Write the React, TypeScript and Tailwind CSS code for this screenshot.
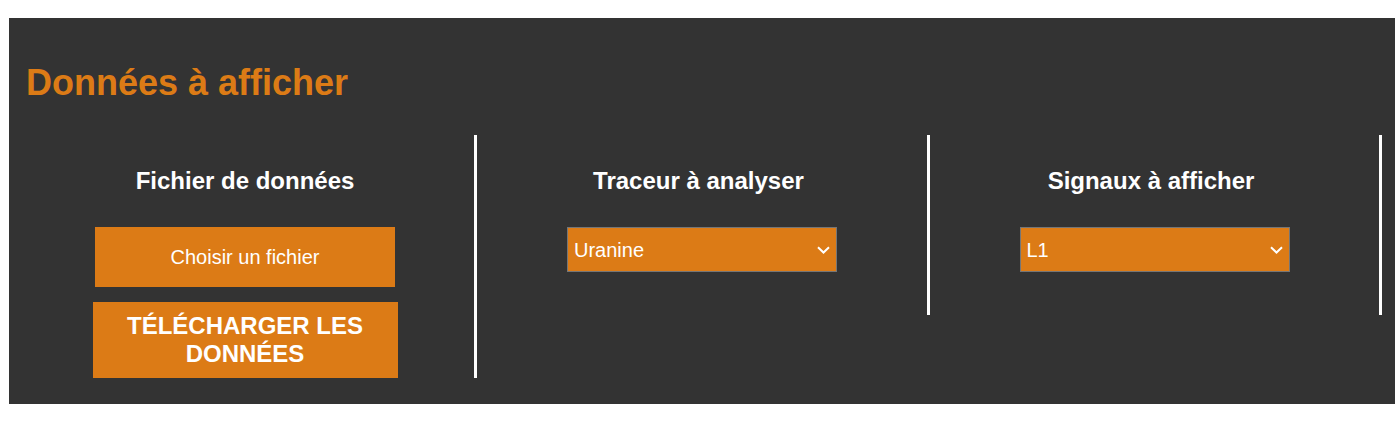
import React from "react";

const Chevron = () => (
  <svg
    className="pointer-events-none absolute right-[7px] top-1/2 -translate-y-1/2"
    width="13"
    height="8"
    viewBox="0 0 13 8"
    fill="none"
  >
    <path d="M1 1.2 L6.5 6.5 L12 1.2" stroke="#ffffff" strokeWidth="2" />
  </svg>
);

const Select = ({ value, options }: { value: string; options: string[] }) => (
  <div className="relative w-[270px] h-[45px]">
    <select
      defaultValue={value}
      className="appearance-none w-full h-full bg-[#dc7b16] border border-[#767676] text-white text-[20px] pl-[6px] pr-[28px] outline-none"
      style={{ fontFamily: '"Liberation Sans", Arial, sans-serif' }}
    >
      {options.map((o) => (
        <option key={o} value={o}>
          {o}
        </option>
      ))}
    </select>
    <Chevron />
  </div>
);

export default function App() {
  return (
    <div
      className="bg-white pl-[9px] pt-[18px] pb-[22px]"
      style={{ fontFamily: '"Liberation Sans", Arial, sans-serif' }}
    >
      <div className="bg-[#333333] pl-[15px] pt-[45px] pb-[26px] overflow-hidden">
        <h1 className="text-[36px] leading-[40px] font-bold text-[#dc7b16] pl-[2px]">
          Données à afficher
        </h1>
        <div className="flex items-start mt-[32px]">
          {/* Column 1 */}
          <div className="w-[453px] border-r-[3px] border-white pt-[32px] pr-[8px] flex flex-col items-center">
            <h3 className="text-[24px] leading-[28px] font-bold text-white">
              Fichier de données
            </h3>
            <label className="mt-[32px] w-[300px] h-[60px] bg-[#dc7b16] text-white text-[20px] flex items-center justify-center cursor-pointer">
              Choisir un fichier
            </label>
            <button className="mt-[15px] w-[305px] h-[76px] bg-[#dc7b16] text-white text-[24px] leading-[28px] font-bold uppercase px-[10px]">
              Télécharger les données
            </button>
          </div>
          {/* Column 2 */}
          <div className="w-[453px] border-r-[3px] border-white pt-[32px] pb-[43px] flex flex-col items-center">
            <h3 className="text-[24px] leading-[28px] font-bold text-white pr-[7px]">
              Traceur à analyser
            </h3>
            <div className="mt-[32px]">
              <Select value="Uranine" options={["Uranine", "Fluorescéine", "Rhodamine"]} />
            </div>
          </div>
          {/* Column 3 */}
          <div className="w-[452px] border-r-[3px] border-white pt-[32px] pb-[43px] flex flex-col items-center">
            <h3 className="text-[24px] leading-[28px] font-bold text-white pr-[7px]">
              Signaux à afficher
            </h3>
            <div className="mt-[32px]">
              <Select value="L1" options={["L1", "L2", "L3", "L4"]} />
            </div>
          </div>
        </div>
      </div>
    </div>
  );
}
